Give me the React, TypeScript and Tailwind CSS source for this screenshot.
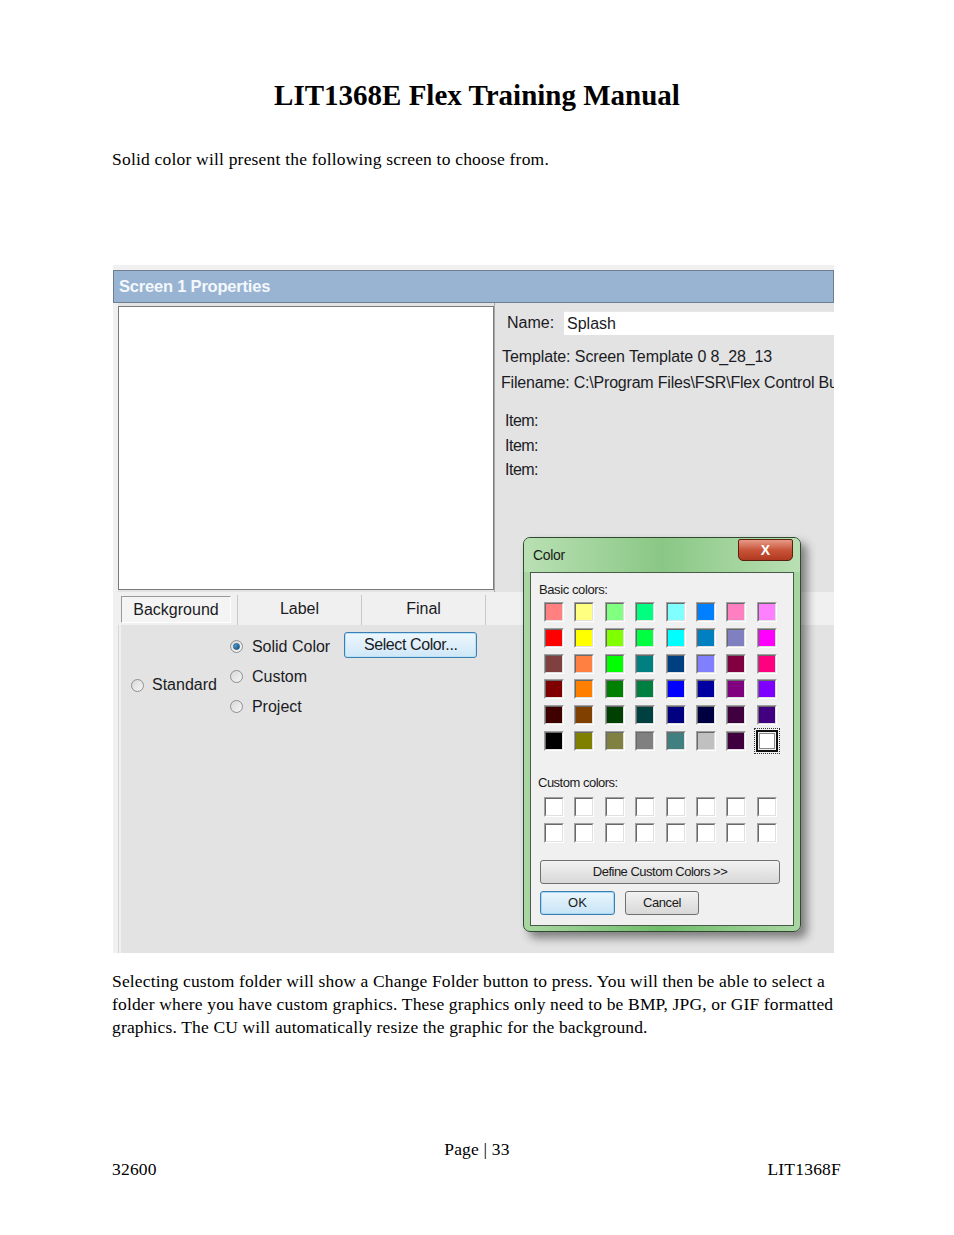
import React from "react";

const basic: string[][] = [
  ["#FF8080", "#FFFF80", "#80FF80", "#00FF80", "#80FFFF", "#0080FF", "#FF80C0", "#FF80FF"],
  ["#FF0000", "#FFFF00", "#80FF00", "#00FF40", "#00FFFF", "#0080C0", "#8080C0", "#FF00FF"],
  ["#804040", "#FF8040", "#00FF00", "#008080", "#004080", "#8080FF", "#800040", "#FF0080"],
  ["#800000", "#FF8000", "#008000", "#008040", "#0000FF", "#0000A0", "#800080", "#8000FF"],
  ["#400000", "#804000", "#004000", "#004040", "#000080", "#000040", "#400040", "#400080"],
  ["#000000", "#808000", "#808040", "#808080", "#408080", "#C0C0C0", "#400040", "#FFFFFF"],
];

function Swatch({ color, selected }: { color: string; selected?: boolean }) {
  if (selected) {
    return (
      <div className="w-[26px] h-[26px] -m-[3px] border border-dotted border-[#333] p-[1px]">
        <div className="w-full h-full border-2 border-[#111] p-[1px]">
          <div className="w-full h-full border border-[#888]" style={{ background: color }} />
        </div>
      </div>
    );
  }
  return (
    <div className="w-[20px] h-[20px] border border-b-white border-r-white border-t-[#a0a0a0] border-l-[#a0a0a0]">
      <div className="w-full h-full border border-t-[#696969] border-l-[#696969] border-b-[#e0e0e0] border-r-[#e0e0e0]" style={{ background: color }} />
    </div>
  );
}

function Radio({ checked }: { checked?: boolean }) {
  return (
    <div className="w-[13px] h-[13px] shrink-0 rounded-full border border-[#8e8f8f] bg-gradient-to-br from-[#d8d8d8] to-[#f6f6f6] flex items-center justify-center">
      {checked && <div className="w-[7px] h-[7px] rounded-full bg-gradient-to-br from-[#5fb0e6] to-[#124d7a] border border-[#1a5a8a]" />}
    </div>
  );
}

function ColorDialog() {
  return (
    <div className="absolute left-[410px] top-[272px] w-[278px] h-[395px] rounded-[7px] border border-[#2f4a2f] bg-gradient-to-r from-[#a9d6a2] via-[#6fbd6a] to-[#a9d6a2] shadow-[6px_6px_10px_rgba(0,0,0,0.45)] font-['Liberation_Sans',sans-serif]">
      <div className="absolute left-0 top-0 w-full h-[34px] rounded-t-[6px] bg-gradient-to-r from-[#b9e0b3] via-[#8ac785] to-[#b9e0b3]" />
      <div className="absolute left-[9px] top-[7px] text-[14px] text-[#1a1a1a] tracking-[-0.3px]">Color</div>
      <div className="absolute left-[214px] top-[1px] w-[55px] h-[22px] rounded-b-[5px] rounded-t-[2px] border border-[#5a2010] bg-gradient-to-b from-[#e69a86] via-[#c8543a] to-[#b03a20] flex items-center justify-center">
        <span className="text-white font-bold text-[14px] leading-none">X</span>
      </div>
      <div className="absolute left-[6px] top-[34px] w-[264px] h-[354px] bg-[#f0f0f0] border border-[#4a5a4a]">
        <div className="absolute left-[8px] top-[7px] text-[13px] text-[#1a1a1a] tracking-[-0.4px]">Basic colors:</div>
        <div className="absolute left-[13px] top-[29px] grid grid-cols-[repeat(8,20px)] gap-x-[10.4px] gap-y-[5.8px]">
          {basic.map((row, r) =>
            row.map((c, i) => <Swatch key={r + "-" + i} color={c} selected={r === 5 && i === 7} />)
          )}
        </div>
        <div className="absolute left-[7px] top-[200px] text-[13px] text-[#1a1a1a] tracking-[-0.5px]">Custom colors:</div>
        <div className="absolute left-[13px] top-[224px] grid grid-cols-[repeat(8,20px)] gap-x-[10.4px] gap-y-[6px]">
          {Array.from({ length: 16 }).map((_, i) => (
            <Swatch key={i} color="#FFFFFF" />
          ))}
        </div>
        <div className="absolute left-[9px] top-[287px] w-[240px] h-[24px] rounded-[3px] border border-[#707070] bg-gradient-to-b from-[#f2f2f2] to-[#d8d8d8] flex items-center justify-center text-[13px] text-[#1a1a1a] tracking-[-0.5px]">
          Define Custom Colors &gt;&gt;
        </div>
        <div className="absolute left-[9px] top-[318px] w-[75px] h-[24px] rounded-[3px] border border-[#3c7fb1] bg-gradient-to-b from-[#eaf6fd] to-[#c8e4f6] shadow-[inset_0_0_0_1px_#a6d8f5] flex items-center justify-center text-[13px] text-[#1a1a1a]">
          OK
        </div>
        <div className="absolute left-[94px] top-[318px] w-[74px] h-[24px] rounded-[3px] border border-[#707070] bg-gradient-to-b from-[#f2f2f2] to-[#d8d8d8] flex items-center justify-center text-[13px] text-[#1a1a1a] tracking-[-0.4px]">
          Cancel
        </div>
      </div>
    </div>
  );
}

function PropertiesWindow() {
  return (
    <div className="relative w-[721px] h-[688px] overflow-hidden bg-[#e3e3e3] font-['Liberation_Sans',sans-serif] text-[#1b1b24] flex flex-col">
      <div className="h-[5px] shrink-0 bg-[#f0f0f0]" />
      <div className="h-[33px] shrink-0 bg-[#98b4d2] border border-[#6f7f90] flex items-center pl-[5px]">
        <span className="text-[16.5px] font-bold text-[#f4f7fb] tracking-[-0.2px]">Screen 1 Properties</span>
      </div>
      <div className="flex-1 flex min-h-0">
        <div className="w-[5px] shrink-0 bg-[#f0f0f0]" />
        <div className="flex-1 min-w-0 flex flex-col">
          <div className="h-[289px] shrink-0 flex">
            <div className="pt-[3px] shrink-0">
              <div className="w-[376px] h-[284px] bg-white border border-[#7a7a7a]" />
            </div>
            <div className="flex-1 min-w-0 border-l border-[#a8a8a8] flex flex-col text-[16px]">
              <div className="flex items-center mt-[8px] h-[24px]">
                <span className="ml-[12px] w-[57px] shrink-0">Name:</span>
                <div className="flex-1 h-[24px] bg-white border-t border-[#e8e8e8] flex items-center pl-[3px]">Splash</div>
              </div>
              <div className="ml-[7px] mt-[9px] leading-[26px] tracking-[-0.1px] whitespace-nowrap">Template: Screen Template 0 8_28_13</div>
              <div className="ml-[6px] leading-[26px] tracking-[-0.2px] whitespace-nowrap overflow-hidden">Filename: C:\Program Files\FSR\Flex Control Bu</div>
              <div className="ml-[10px] mt-[13px] leading-[24.5px] tracking-[-0.5px]">
                <div>Item:</div>
                <div>Item:</div>
                <div>Item:</div>
              </div>
            </div>
          </div>
          <div className="h-[33px] shrink-0 bg-[#f0f0f0] pt-[3px] text-[16px]">
            <div className="h-[30px] flex items-start">
              <div className="ml-[3px] mt-[1px] w-[110px] h-[27px] border border-t-[#9a9a9a] border-l-[#9a9a9a] border-b-white border-r-white bg-[#f4f4f4] flex items-center justify-center">Background</div>
              <div className="ml-[6px] w-px h-[30px] bg-[#c8c8c8]" />
              <div className="w-[123px] h-[27px] flex items-center justify-center">Label</div>
              <div className="w-px h-[30px] bg-[#c8c8c8]" />
              <div className="w-[123px] h-[27px] flex items-center justify-center">Final</div>
              <div className="w-px h-[30px] bg-[#c8c8c8]" />
            </div>
          </div>
          <div className="flex-1 flex">
            <div className="w-[3px] shrink-0 bg-[#f0f0f0] border-l border-[#d6d6d6]" />
            <div className="flex-1 text-[16px]">
              <div className="flex items-start">
                <div className="flex items-center gap-[8px] ml-[10px] mt-[50px] h-[20px]">
                  <Radio />
                  <span>Standard</span>
                </div>
                <div className="flex flex-col ml-[13px] mt-[12px] gap-[11px]">
                  <div className="flex items-center gap-[9px] h-[19px]"><Radio checked /><span>Solid Color</span></div>
                  <div className="flex items-center gap-[9px] h-[19px]"><Radio /><span>Custom</span></div>
                  <div className="flex items-center gap-[9px] h-[19px]"><Radio /><span>Project</span></div>
                </div>
                <div className="ml-[14px] mt-[7px] w-[133px] h-[26px] rounded-[3px] border border-[#3c7fb1] bg-gradient-to-b from-[#eef7fd] to-[#cfe7f7] shadow-[inset_0_0_0_1px_#b8e0f7] flex items-center justify-center tracking-[-0.4px]">
                  Select Color...
                </div>
              </div>
            </div>
          </div>
        </div>
      </div>
      <ColorDialog />
    </div>
  );
}

export default function App() {
  return (
    <div className="w-[954px] h-[1235px] bg-white text-black font-['Liberation_Serif',serif] flex flex-col">
      <div className="mt-[77px] text-center text-[29px] font-bold leading-[36px]">LIT1368E Flex Training Manual</div>
      <div className="ml-[112px] mt-[35px] text-[17.5px] tracking-[0.2px] leading-[22px]">Solid color will present the following screen to choose from.</div>
      <div className="ml-[113px] mt-[95px]">
        <PropertiesWindow />
      </div>
      <div className="ml-[112px] mt-[17px] text-[17.5px] tracking-[0.15px] leading-[23px] whitespace-nowrap">
        Selecting custom folder will show a Change Folder button to press. You will then be able to select a
        <br />
        folder where you have custom graphics. These graphics only need to be BMP, JPG, or GIF formatted
        <br />
        graphics. The CU will automatically resize the graphic for the background.
      </div>
      <div className="mt-[100px] text-center text-[17.5px] tracking-[0.2px] leading-[20px]">Page | 33</div>
      <div className="ml-[112px] mr-[113px] flex justify-between text-[17.5px] tracking-[0.2px] leading-[20px]">
        <span>32600</span>
        <span>LIT1368F</span>
      </div>
    </div>
  );
}
